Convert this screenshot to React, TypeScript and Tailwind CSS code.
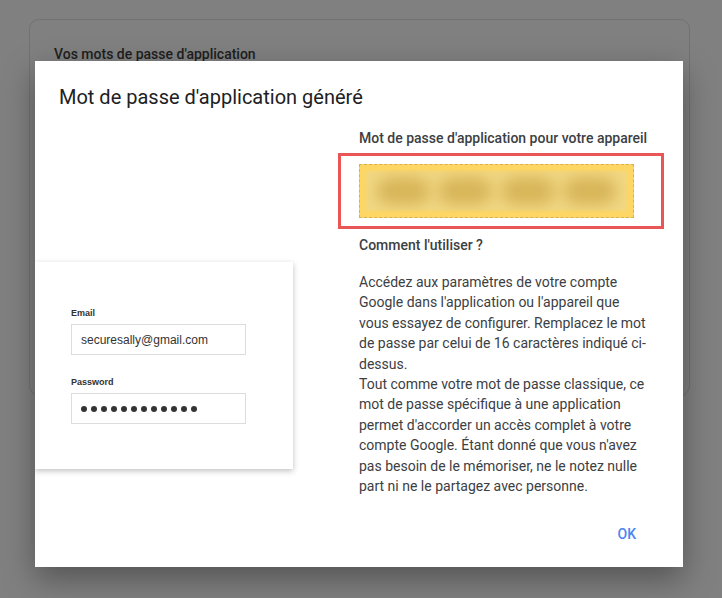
import React from 'react';

const font = { fontFamily: 'Roboto, "Noto Sans", sans-serif' };

const lines = [
  "Accédez aux paramètres de votre compte",
  "Google dans l'application ou l'appareil que",
  "vous essayez de configurer. Remplacez le mot",
  "de passe par celui de 16 caractères indiqué ci-",
  "dessus.",
  "Tout comme votre mot de passe classique, ce",
  "mot de passe spécifique à une application",
  "permet d'accorder un accès complet à votre",
  "compte Google. Étant donné que vous n'avez",
  "pas besoin de le mémoriser, ne le notez nulle",
  "part ni ne le partagez avec personne.",
];

const LoginPreview = () => (
  <div className="w-[258px] h-[207px] bg-white shadow-[0_2px_6px_rgba(0,0,0,0.25)] pl-[36px] pt-[45px] font-['Liberation_Sans',Arial,sans-serif]">
    <div className="text-[9px] font-bold text-[#333] leading-[12px]">Email</div>
    <div className="mt-[5px] w-[175px] h-[31px] border border-[#dcdcdc] flex items-center pl-[9px] text-[12px] text-[#333]">
      securesally@gmail.com
    </div>
    <div className="mt-[21px] text-[9px] font-bold text-[#333] leading-[12px]">Password</div>
    <div className="mt-[5px] w-[175px] h-[31px] border border-[#dcdcdc] flex items-center pl-[9px] gap-[4px]">
      {Array.from({ length: 12 }).map((_, i) => (
        <span key={i} className="w-[6px] h-[6px] rounded-full bg-[#333]" />
      ))}
    </div>
  </div>
);

const BlurredPassword = () => (
  <div className="-ml-[21px] w-[326px] border-[3px] border-[#ea5555] pl-[18px] pt-[8px] pb-[8px]">
    <div className="w-[275px] h-[54px] bg-[#fdd663] border border-dashed border-[#d6b255] p-[6px]">
      <div className="relative w-full h-full bg-[#f3d985] blur-[1.5px] overflow-hidden">
        <div className="absolute inset-0 flex items-center justify-around px-[6px]">
          {[0, 1, 2, 3].map((i) => (
            <span key={i} className="w-[54px] h-[28px] rounded-full bg-[#d6b458] blur-[8px]" />
          ))}
        </div>
      </div>
    </div>
  </div>
);

export default function App() {
  return (
    <div className="relative w-[722px] h-[598px] overflow-hidden bg-[#808080]" style={font}>
      {/* page behind the overlay */}
      <div className="ml-[29px] mt-[19px] w-[661px] h-[377px] rounded-[10px] border border-[#727272] pl-[24px] pt-[24px]">
        <div className="text-[14px] font-medium text-[#1e1e1e] leading-[20px]">Vos mots de passe d'application</div>
      </div>

      {/* dialog */}
      <div className="absolute inset-0 pl-[35px] pt-[61px]">
        <div className="w-[648px] h-[506px] bg-white overflow-hidden shadow-[0_12px_30px_rgba(0,0,0,0.35)] flex flex-col">
          <h1 className="pl-[24px] mt-[24px] text-[20px] leading-[24px] text-[#202124]">
            Mot de passe d'application généré
          </h1>
          <div className="grid grid-cols-2 mt-[19px]">
            <div className="pt-[134px]">
              <LoginPreview />
            </div>
            <div className="pr-[20px] text-[#3c4043]">
              <div className="text-[14px] font-medium leading-[20px]">Mot de passe d'application pour votre appareil</div>
              <div className="mt-[5px]">
                <BlurredPassword />
              </div>
              <div className="mt-[6px] text-[14px] font-medium leading-[20px]">Comment l'utiliser ?</div>
              <p className="mt-[17px] text-[14px] leading-[20.4px]">
                {lines.map((l, i) => (
                  <span key={i} className="block whitespace-nowrap">{l}</span>
                ))}
              </p>
            </div>
          </div>
          <div className="flex justify-end pr-[47px] mt-[28px]">
            <button className="text-[14px] font-medium text-[#4a86f0] leading-[20px]">OK</button>
          </div>
        </div>
      </div>
    </div>
  );
}
